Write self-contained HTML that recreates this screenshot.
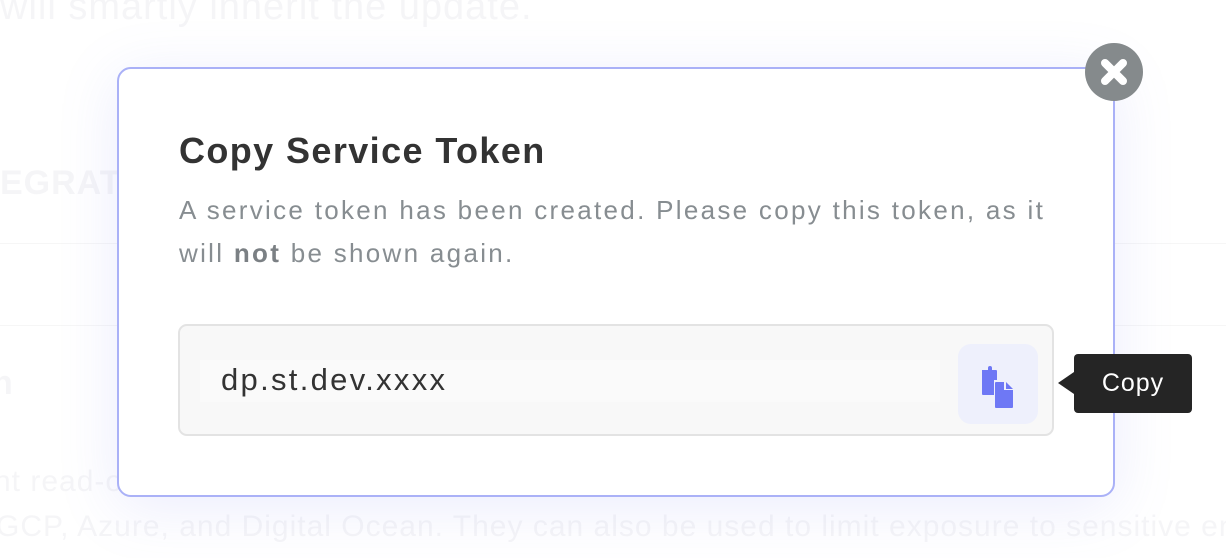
<!DOCTYPE html>
<html><head><meta charset="utf-8"><style>
html,body{margin:0;padding:0;width:1226px;height:558px;overflow:hidden;background:#fff;font-family:"Liberation Sans",sans-serif;position:relative}
.bg{position:absolute;color:#f5f5f7;white-space:nowrap;font-size:30px;letter-spacing:1px}
.modal{position:absolute;left:117px;top:67px;width:994px;height:426px;border:2px solid #aab1f7;border-radius:14px;background:#fff;box-shadow:0 10px 60px rgba(120,130,240,0.15)}
h1{position:absolute;left:179px;top:130px;margin:0;font-size:36px;font-weight:bold;color:#333;letter-spacing:1.4px}
.desc{position:absolute;left:179px;top:189px;width:920px;font-size:26px;line-height:43px;color:#878d91;margin:0;letter-spacing:2.3px;white-space:nowrap}
.desc b{color:#7b8084}
.box{position:absolute;left:178px;top:324px;width:876px;height:112px;border:2px solid #e3e3e3;border-radius:9px;background:#f8f8f8;box-sizing:border-box}
.field{position:absolute;left:200px;top:360px;width:740px;height:42px;background:#fafafa}
.tok{position:absolute;left:221px;top:362px;font-size:31px;color:#333;letter-spacing:2.3px}
.btn{position:absolute;left:958px;top:344px;width:80px;height:80px;background:#eef0fc;border-radius:13px}
.tip{position:absolute;left:1074px;top:354px;width:118px;height:59px;background:#252525;border-radius:4px;color:#fff;font-size:25px;line-height:59px;text-align:center;letter-spacing:1px}
.tip:before{content:"";position:absolute;left:-16px;top:18px;border-top:11px solid transparent;border-bottom:11px solid transparent;border-right:16px solid #252525}
.close{position:absolute;left:1085px;top:43px;width:58px;height:58px;border-radius:50%;background:#858a8c}
</style></head><body>
<div class="bg" style="left:0;top:-14px;font-size:38px">will smartly inherit the update.</div>
<div class="bg" style="left:0;top:164px;font-weight:bold;font-size:34px">EGRATIONS</div>
<div style="position:absolute;left:0;top:243px;width:1226px;height:1px;background:#f6f6f6"></div>
<div style="position:absolute;left:0;top:325px;width:1226px;height:1px;background:#f6f6f6"></div>
<div class="bg" style="left:-8px;top:364px;font-weight:bold;font-size:34px">n</div>
<div class="bg" style="left:-6px;top:465px">nt read-only tokens can be used to access your secrets from a</div>
<div class="bg" style="left:-4px;top:510px">GCP, Azure, and Digital Ocean. They can also be used to limit exposure to sensitive envi</div>
<div class="modal"></div>
<h1>Copy Service Token</h1>
<p class="desc">A service token has been created. Please copy this token, as it<br>will <b>not</b> be shown again.</p>
<div class="box"></div>
<div class="field"></div>
<div class="tok">dp.st.dev.xxxx</div>
<div class="btn"><svg width="80" height="80" viewBox="0 0 80 80">
<path d="M24 26 h6 v-2 a2 2 0 0 1 4 0 v2 h4 a1 1 0 0 1 1 1 v9 h-3 v15 h-11 a1 1 0 0 1 -1 -1 z" fill="#6e78f5"/>
<path d="M37 39 a1 1 0 0 1 1 -1 h8 v8 h9 v17 a1 1 0 0 1 -1 1 h-16 a1 1 0 0 1 -1 -1 z" fill="#6e78f5"/>
<path d="M48 38 l7 7 h-7 z" fill="#6e78f5"/>
</svg></div>
<div class="tip">Copy</div>
<div class="close"><svg width="58" height="58" viewBox="0 0 58 58"><path d="M20 20 L38 38 M38 20 L20 38" stroke="#fff" stroke-width="8" stroke-linecap="round"/></svg></div>
</body></html>
